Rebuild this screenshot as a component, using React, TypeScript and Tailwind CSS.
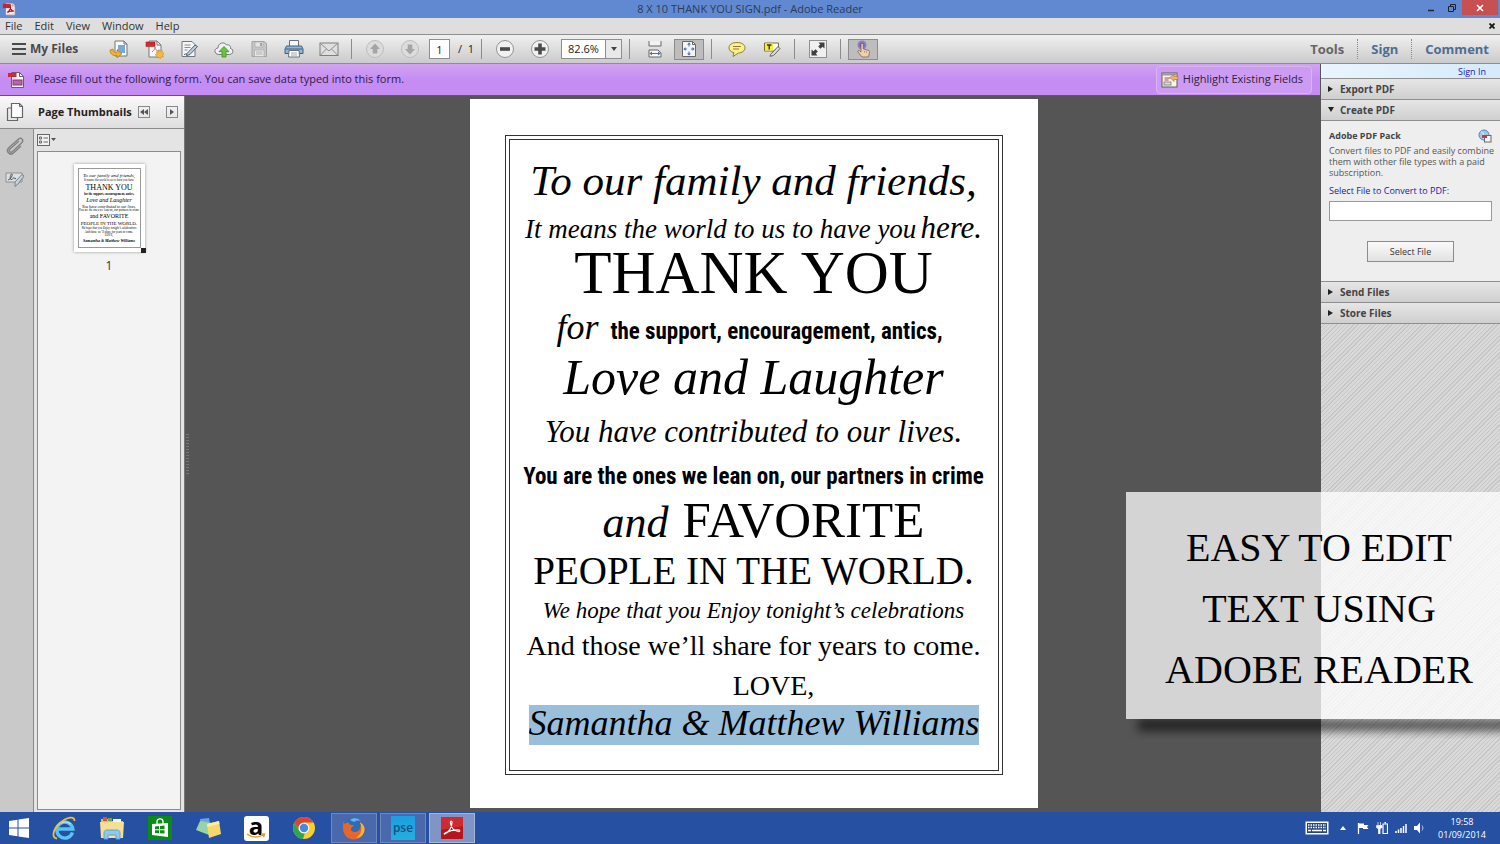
import type { ReactNode } from 'react';

const cx = (...parts: (string | false | undefined)[]) => parts.filter(Boolean).join(' ');

/* ---------- toolbar icons ---------- */

const PdfMark = ({ className }: { className?: string }) => (
  <svg viewBox="0 0 16 16" className={className} aria-hidden="true">
    <path d="M4 1h8l3 3v11H4z" fill="#f6eeee" stroke="#9a7676" strokeWidth=".8" />
    <path d="M11.500 1v3.500H15" fill="#ddd" stroke="#9a7676" strokeWidth=".6" />
    <rect x="1" y="2" width="9" height="5" fill="#c8232c" />
    <path d="M6 12c3-2 4-5 3.500-7.500C9 8 11 10 13.500 10.500 10 10 8 10.500 6 12z" fill="none" stroke="#b01620" strokeWidth="1.400" />
  </svg>
);

const OpenIcon = () => (
  <svg viewBox="0 0 20 20" className="size-5">
    <path d="M6 2h9l3 3v12H6z" fill="#f8fafc" stroke="#70757a" />
    <path d="M15 2v3h3" fill="none" stroke="#70757a" />
    <path d="M9 7h7M9 9h7M8 11h8M9 13h7" stroke="#4f8fd0" strokeWidth="1.300" />
    <path d="M1 11c0 5 4 6 7 5.500v2.300l5-4-5-3.800v2.300c-2 .5-4-.2-4-3.300z" fill="#f0b030" stroke="#b07a10" strokeWidth=".7" />
  </svg>
);
const CreateIcon = () => (
  <svg viewBox="0 0 20 20" className="size-5">
    <path d="M5 2h8l4 4v12H5z" fill="#f7f7f7" stroke="#77797c" />
    <path d="M13 2v4h4" fill="none" stroke="#77797c" />
    <rect x="2" y="3" width="9" height="4.500" fill="#d32a30" stroke="#a01418" strokeWidth=".5" />
    <path d="M8 13c2-1.500 3-3 3-5 0 2 1.500 4 4 4" fill="none" stroke="#b08080" />
    <path d="M15 10.500l1.200 1.700 2-.6.100 2.100 1.900.9-1.600 1.400.7 2-2.100-.1-1.100 1.900-1.500-1.500-2 .7.300-2-1.800-1.200 1.800-1.100-.2-2.100 2 .4z" fill="#f5b942" stroke="#c68a1c" strokeWidth=".6" />
  </svg>
);
const EditIcon = () => (
  <svg viewBox="0 0 20 20" className="size-5">
    <path d="M3 2.500h10l3 3v12H3z" fill="#f4f5f6" stroke="#73777b" />
    <path d="M5.500 6h6M5.500 8.500h6M5.500 11h3" stroke="#8a8e92" />
    <path d="M8 14.500l8-8.500 2.500 1.500-7.500 8-3.500 1.200z" fill="#b9cddd" stroke="#45586a" strokeWidth=".9" />
    <path d="M5 16c1-2 2 0 3-1.500" fill="none" stroke="#45586a" />
  </svg>
);
const CloudIcon = () => (
  <svg viewBox="0 0 20 20" className="size-5">
    <path d="M5 15.500c-5 0-5.500-6-1-6.500C4 4 10 2 12.500 6c3-1 4.500 1.500 4 3.500 3.500.5 3.200 6-1 6z" fill="#eef0f1" stroke="#777b7e" />
    <path d="M10 7.500l5 5.200h-3V18H8v-5.300H5z" fill="#6cc43a" stroke="#3f8f1c" strokeWidth=".8" />
  </svg>
);
const SaveIcon = () => (
  <svg viewBox="0 0 20 20" className="size-5">
    <path d="M3 2.500h12l2.500 2v13H3z" fill="#c6c6c6" stroke="#a3a3a3" />
    <rect x="6" y="3" width="8" height="5" fill="#e4e4e4" stroke="#a8a8a8" strokeWidth=".7" />
    <rect x="11" y="4" width="2" height="3" fill="#a3a3a3" />
    <rect x="5.500" y="11" width="9.500" height="6.500" fill="#e8e8e8" stroke="#a8a8a8" strokeWidth=".7" />
    <path d="M7 13h6.500M7 15h6.500" stroke="#b0b0b0" />
  </svg>
);
const PrintIcon = () => (
  <svg viewBox="0 0 20 20" className="size-5">
    <path d="M5.500 1.500h9V8h-9z" fill="#f5f7f9" stroke="#6b7076" />
    <path d="M2.500 7h15l1.500 3v4.500H1V10z" fill="#8fb6d6" stroke="#3f5f7c" />
    <path d="M2 10h16" stroke="#3f5f7c" />
    <path d="M5 11.500h10l.5 6.500h-11z" fill="#fff" stroke="#6b7076" />
    <path d="M7 14h6M7 16h6" stroke="#a3a9af" />
  </svg>
);
const MailIcon = () => (
  <svg viewBox="0 0 20 20" className="size-5">
    <rect x="1" y="4" width="18" height="12.500" fill="#dfdfdf" stroke="#7e7e7e" />
    <path d="M1.500 4.500L10 12l8.500-7.500M1.500 16l6-6M18.500 16l-6-6" fill="none" stroke="#8f8f8f" />
  </svg>
);
const ArrowIcon = ({ down }: { down?: boolean }) => (
  <svg viewBox="0 0 20 20" className={cx('size-5', down && 'rotate-180')}>
    <circle cx="10" cy="10" r="8.500" fill="#dcdcdc" stroke="#bdbdbd" />
    <path d="M10 4.500l5 5.500h-2.700v4.500H7.700V10H5z" fill="#a5a5a5" />
  </svg>
);
const ZoomIcon = ({ plus }: { plus?: boolean }) => (
  <svg viewBox="0 0 20 20" className="size-5">
    <circle cx="10" cy="10" r="8.500" fill="#f1f1f1" stroke="#949494" />
    <path d={plus ? 'M4.500 10h11M10 4.500v11' : 'M5 10h10'} stroke="#4b4b4b" strokeWidth="3.600" />
  </svg>
);
const FitWidthIcon = () => (
  <svg viewBox="0 0 20 20" className="size-5">
    <path d="M4 2v5h12V2" fill="#f2f2f2" stroke="#666" />
    <path d="M4 18v-7h9l3 3v4z" fill="#f8f8f8" stroke="#666" />
    <path d="M5 14.500h10" stroke="#4a6fa8" />
    <path d="M7 12.500L4.500 14.500 7 16.500M13 12.500l2.500 2-2.500 2z" fill="#4a6fa8" />
  </svg>
);
const FitPageIcon = () => (
  <svg viewBox="0 0 20 20" className="size-5">
    <path d="M3.500 2.500h10l3 3v12h-13z" fill="#f3f5f8" stroke="#666" />
    <path d="M13.500 2.500v3h3" fill="none" stroke="#666" />
    <path d="M10 4v3.500M10 16v-3.500M5 10h3M15 10h-3" stroke="#4a6fa8" />
    <path d="M10 3.500l2 2H8zM10 16.500l2-2H8zM4.500 10l2-2v4zM15.500 10l-2-2v4z" fill="#4a6fa8" />
  </svg>
);
const CommentIcon = () => (
  <svg viewBox="0 0 20 20" className="size-5">
    <path d="M10 3.500c5 0 8 2.200 8 5.300 0 3-3 5-6.500 5.200L6 17.500l1-3.800c-3-.6-5-2.400-5-4.900 0-3.100 3-5.300 8-5.300z" fill="#fbf08a" stroke="#8a7f35" />
    <path d="M6 7.500h8M6 10h6" stroke="#8a7f35" />
  </svg>
);
const HighlightTextIcon = () => (
  <svg viewBox="0 0 20 20" className="size-5">
    <path d="M2.500 4h14v5l-5 3h-9z" fill="#fbfbf0" stroke="#77703a" />
    <rect x="3" y="4.500" width="8" height="7" fill="#f8ec3a" />
    <path d="M5 6h4.500M7.200 6v4.500" stroke="#333" strokeWidth="1.400" />
    <path d="M8.500 15.500l7.500-8 2 2.200-6.500 6.800-3.500.8z" fill="#d8d8d8" stroke="#55585b" strokeWidth=".9" />
  </svg>
);
const FullscreenIcon = () => (
  <svg viewBox="0 0 20 20" className="size-5">
    <rect x="1.500" y="1.500" width="17" height="17" fill="#f0f0f0" stroke="#8f8f8f" />
    <path d="M16.500 3.500v6l-2-1.700-2 2-2.300-2.300 2-2-1.700-2zM3.500 16.500v-6l2 1.700 2-2 2.300 2.300-2 2 1.700 2z" fill="#3f3f3f" />
  </svg>
);
const TouchIcon = () => (
  <svg viewBox="0 0 20 20" className="size-5">
    <circle cx="9" cy="6" r="4.500" fill="#8f80bd" />
    <circle cx="9" cy="6" r="2.500" fill="#6a58a8" />
    <path d="M8 5.500c0-1.600 2.300-1.600 2.300 0V10l5 1.300c1 .3 1.300 1 1.200 2L15.500 18H9l-4-5c-.8-1.200.6-2 1.500-1.200L8 13z" fill="#ecd0b4" stroke="#7d6757" strokeWidth=".8" />
    <path d="M11.500 12v1.500M13.500 12.300v1.500" stroke="#7d6757" strokeWidth=".6" />
  </svg>
);
const FormIcon = () => (
  <svg viewBox="0 0 18 18" className="size-[18px] shrink-0" aria-hidden="true">
    <path d="M3.500 1.500h8l4 4v11h-12z" fill="#fbf7fb" stroke="#6c5a70" />
    <path d="M11.500 1.500v4h4" fill="none" stroke="#6c5a70" />
    <rect x="0" y="2" width="8.500" height="4" fill="#d7262e" />
    <rect x="5" y="9" width="9" height="5" fill="#c25fae" stroke="#7d3a72" />
  </svg>
);
const FieldsIcon = () => (
  <svg viewBox="0 0 18 18" className="size-[18px] shrink-0" aria-hidden="true">
    <rect x="1" y="2" width="15" height="14" fill="#f7f4ee" stroke="#5e5a5e" />
    <rect x="1.500" y="2.500" width="14" height="2" fill="#9a979a" />
    <path d="M3.500 7h6M3.500 9h4" stroke="#b44" strokeWidth="1.200" />
    <rect x="3" y="11" width="7" height="3" fill="#ddd" stroke="#777" strokeWidth=".8" />
    <path d="M9 6.500l4-3v2h4v3h-4v2z" fill="#f4b55a" stroke="#a8702a" strokeWidth=".6" />
  </svg>
);

/* ---------- shared bits ---------- */

const ToolButton = ({ label, children, pressed }: { label: string; children: ReactNode; pressed?: boolean }) => (
  <button
    type="button"
    aria-label={label}
    className={cx('flex h-[21px] items-center justify-center', pressed ? 'ml-0.5 w-[30px] border border-[#8c8c8c] bg-[#bdbdbd]' : 'w-[35px]')}
  >
    {children}
  </button>
);

const Divider = ({ wide }: { wide?: boolean }) => <span className={cx('h-5 w-px bg-[#8b8b8b]', wide ? 'mx-[7px]' : 'mx-[5px]')} />;

const Toolbar = () => (
  <div className="flex h-[30px] items-center border-y border-[#8e8e8e] bg-linear-to-b from-[#f0f0f0] to-[#cbcbcb] pl-3">
    <button type="button" className="flex w-[89px] items-center gap-1 text-[12px] leading-4 font-bold whitespace-nowrap text-[#4a4a4a]">
      <svg viewBox="0 0 14 12" className="h-3 w-3.5" aria-hidden="true">
        <path d="M0 1h14M0 6h14M0 11h14" stroke="#4a4a4a" strokeWidth="1.800" />
      </svg>
      My Files
    </button>
    <ToolButton label="Open"><OpenIcon /></ToolButton>
    <ToolButton label="Create PDF"><CreateIcon /></ToolButton>
    <ToolButton label="Edit"><EditIcon /></ToolButton>
    <ToolButton label="Upload"><CloudIcon /></ToolButton>
    <ToolButton label="Save"><SaveIcon /></ToolButton>
    <ToolButton label="Print"><PrintIcon /></ToolButton>
    <ToolButton label="Email"><MailIcon /></ToolButton>
    <Divider />
    <ToolButton label="Previous page"><ArrowIcon /></ToolButton>
    <ToolButton label="Next page"><ArrowIcon down /></ToolButton>
    <input aria-label="Page number" defaultValue="1" className="ml-0.5 h-5 w-[21px] border border-[#8e8e8e] bg-white text-center text-[11px] leading-4 text-[#222]" />
    <span className="mx-2 mr-0.5 text-[11px] leading-4 text-[#222]">/&nbsp; 1</span>
    <Divider />
    <ToolButton label="Zoom out"><ZoomIcon /></ToolButton>
    <ToolButton label="Zoom in"><ZoomIcon plus /></ToolButton>
    <div className="relative ml-1 flex h-5 w-[61px] border border-[#8e8e8e] bg-white">
      <select aria-label="Zoom level" className="w-full appearance-none bg-transparent pl-1.5 text-[11px] text-[#222]">
        <option>82.6%</option>
      </select>
      <span className="pointer-events-none absolute inset-y-0 right-0 flex w-4 items-center justify-center border-l border-[#8e8e8e] bg-[#e9e9e9]">
        <svg viewBox="0 0 6 4" className="h-1 w-1.5"><path d="M0 0h6L3 4z" fill="#444" /></svg>
      </span>
    </div>
    <Divider wide />
    <ToolButton label="Fit width"><FitWidthIcon /></ToolButton>
    <ToolButton label="Fit page" pressed><FitPageIcon /></ToolButton>
    <Divider wide />
    <ToolButton label="Add comment"><CommentIcon /></ToolButton>
    <ToolButton label="Highlight text"><HighlightTextIcon /></ToolButton>
    <Divider />
    <ToolButton label="Full screen"><FullscreenIcon /></ToolButton>
    <Divider />
    <ToolButton label="Touch mode" pressed><TouchIcon /></ToolButton>
    <div className="ml-auto flex h-5 items-center text-[13px] leading-5 font-bold text-[#4f6d92]">
      <button type="button" className="px-[13px] text-[#666]">Tools</button>
      <button type="button" className="border-x border-dotted border-[#888] px-[13px]">Sign</button>
      <button type="button" className="px-[11px] pl-[13px]">Comment</button>
    </div>
  </div>
);

const TitleBar = () => (
  <header className="flex h-[18px] shrink-0 items-center bg-[#6189d1] text-[11px] text-[#2c3a58]">
    <div className="flex flex-1 items-center">
      <PdfMark className="ml-0.5 h-4 w-3.5" />
    </div>
    <h1>8 X 10 THANK YOU SIGN.pdf - Adobe Reader</h1>
    <div className="flex flex-1 items-start justify-end self-stretch">
      <button type="button" aria-label="Minimize" className="flex h-[15px] w-[21px] items-center justify-center">
        <svg viewBox="0 0 8 8" className="size-2"><path d="M1 6.500h6" stroke="#222" strokeWidth="1.500" /></svg>
      </button>
      <button type="button" aria-label="Restore" className="flex h-[15px] w-[21px] items-center justify-center">
        <svg viewBox="0 0 8 8" className="size-2"><path d="M.5 2.500h5v5h-5zM2.500 2V.5h5v5H6" fill="none" stroke="#222" /></svg>
      </button>
      <button type="button" aria-label="Close" className="mr-0.5 flex h-[15px] w-9 items-center justify-center bg-[#c75050]">
        <svg viewBox="0 0 8 8" className="size-2"><path d="M1 1l6 6M7 1L1 7" stroke="#fff" strokeWidth="1.600" /></svg>
      </button>
    </div>
  </header>
);

const MenuBar = () => (
  <nav className="flex h-4 shrink-0 items-center gap-3 bg-[#dedede] px-[5px] text-[11px] text-[#333]">
    {['File', 'Edit', 'View', 'Window', 'Help'].map((m) => (
      <button key={m} type="button" className="leading-4">{m}</button>
    ))}
    <button type="button" aria-label="Close document" className="ml-auto">
      <svg viewBox="0 0 6 6" className="size-1.5"><path d="M.5 .5l5 5M5.500 .5l-5 5" stroke="#111" strokeWidth="1.700" /></svg>
    </button>
  </nav>
);

const FormNotice = () => (
  <div className="flex h-8 shrink-0 items-center gap-2 border-b border-[#70449a] bg-linear-to-b from-[#d0a4ee] to-[#c58df4] to-50% px-2 text-[#2e1c40]">
    <FormIcon />
    <p className="text-[11px]">Please fill out the following form. You can save data typed into this form.</p>
    <button type="button" className="ml-auto flex h-7 items-center gap-1 rounded-sm border border-[#d9b4f5] bg-[#cc9cf3] pr-2 pl-1 text-[11px]">
      <FieldsIcon />
      Highlight Existing Fields
    </button>
  </div>
);

/* ---------- sign artwork ---------- */

const Sign = () => (
  <article className="w-[568px] bg-white px-[35px] pt-9 pb-[33px]">
    <div className="border border-[#333] p-[3px]">
      <div className="flex h-[632px] flex-col items-center border border-[#333] pt-[19px] font-['Liberation_Serif',serif] leading-none whitespace-nowrap text-black">
        <p className="text-[43px] leading-none italic">To our family and friends,</p>
        <p className="mt-2.5 flex items-baseline gap-1 text-[27px] leading-none italic">
          It means the world to us to have you <span className="text-[31px] leading-none">here.</span>
        </p>
        <p className="text-[61px] leading-[60px]">THANK YOU</p>
        <p className="mt-1.5 flex items-baseline gap-3 pr-2">
          <span className="text-[36px] leading-none italic">for</span>
          <span className="font-['Roboto_Condensed','Liberation_Serif',serif] text-[23px] leading-6 font-bold">the support, encouragement, antics,</span>
        </p>
        <p className="mt-[7px] text-[50px] leading-none italic">Love and Laughter</p>
        <p className="mt-3.5 text-[31px] leading-none italic">You have contributed to our lives.</p>
        <p className="mt-[18px] font-['Roboto_Condensed','Liberation_Serif',serif] text-[23px] leading-6 font-bold">You are the ones we lean on, our partners in crime</p>
        <p className="mt-1.5 flex items-baseline gap-3.5 pl-5 text-[51px] leading-none">
          <span className="text-[44px] leading-none italic">and</span>FAVORITE
        </p>
        <p className="mt-[5px] text-[39px] leading-none">PEOPLE IN THE WORLD.</p>
        <p className="mt-2.5 text-[23px] leading-[22px] italic">We hope that you Enjoy tonight’s celebrations</p>
        <p className="mt-2.5 text-[28px] leading-none">And those we’ll share for years to come.</p>
        <p className="mt-3 pl-10 text-[28px] leading-none">LOVE,</p>
        <input
          aria-label="Names"
          defaultValue="Samantha & Matthew Williams"
          className="mt-[5px] h-10 w-[450px] bg-[#9abfdb] pb-1 text-center text-[36px] leading-9 italic outline-none"
        />
      </div>
    </div>
  </article>
);

const thumbLines = [
  { text: 'To our family and friends,', style: 'text-[5px] italic' },
  { text: 'It means the world to us to have you here.', style: 'text-[3px] italic' },
  { text: 'THANK YOU', style: 'text-[8px]' },
  { text: 'for the support, encouragement, antics,', style: 'text-[3px] font-bold' },
  { text: 'Love and Laughter', style: 'text-[6px] italic' },
  { text: 'You have contributed to our lives.', style: 'text-[4px] italic' },
  { text: 'You are the ones we lean on, our partners in crime', style: 'text-[3px]' },
  { text: 'and FAVORITE', style: 'text-[6px]' },
  { text: 'PEOPLE IN THE WORLD.', style: 'text-[5px]' },
  { text: 'We hope that you Enjoy tonight’s celebrations', style: 'text-[3px] italic' },
  { text: 'And those we’ll share for years to come.', style: 'text-[3px]' },
  { text: 'LOVE,', style: 'text-[3px]' },
  { text: 'Samantha & Matthew Williams', style: 'text-[4px] font-bold italic' },
];

const Thumbnail = () => (
  <button type="button" className="flex flex-col items-center gap-1.5 text-[12px] text-[#333]">
    <span className="relative block h-[88px] w-[71px] bg-white p-1 shadow-[0_0_3px_#999]">
      <span className="flex h-full flex-col items-center justify-center overflow-hidden border border-[#999] font-['Liberation_Serif',serif] whitespace-nowrap text-black">
        {thumbLines.map((l) => (
          <span key={l.text} className={cx('block leading-tight', l.style)}>{l.text}</span>
        ))}
      </span>
      <span className="absolute -right-px -bottom-px size-[5px] bg-[#222]" />
    </span>
    <span className="leading-4">1</span>
  </button>
);

const SidePanel = () => (
  <aside className="flex w-[185px] shrink-0 flex-col border-r border-[#777]">
    <div className="flex h-[33px] shrink-0 items-center border-b border-[#8b8b8b] bg-linear-to-b from-[#fafafa] to-[#dedede] px-1.5">
      <button type="button" aria-label="Pages" className="flex w-8 shrink-0 items-center">
        <svg viewBox="0 0 18 20" className="h-5 w-[18px]">
          <path d="M2 6h4M1.500 6v12.500h10V16" fill="none" stroke="#666" strokeWidth="1.200" />
          <path d="M5.500 1.500h8l3 3v11h-11z" fill="#fdfdfd" stroke="#666" strokeWidth="1.200" />
          <path d="M13.500 1.500v3h3" fill="none" stroke="#666" />
        </svg>
      </button>
      <h2 className="text-[11px] font-bold whitespace-nowrap text-[#222]">Page Thumbnails</h2>
      <button type="button" aria-label="Collapse" className="ml-auto flex size-3 shrink-0 items-center justify-center border border-[#888]">
        <svg viewBox="0 0 8 6" className="h-1.5 w-2"><path d="M4 0v6L0 3zM8 0v6L4 3z" fill="#555" /></svg>
      </button>
      <button type="button" aria-label="Expand" className="ml-4 flex size-3 shrink-0 items-center justify-center border border-[#888]">
        <svg viewBox="0 0 4 6" className="h-1.5 w-1"><path d="M0 0v6l4-3z" fill="#555" /></svg>
      </button>
    </div>
    <div className="flex flex-1">
      <div className="flex w-[34px] flex-col items-center gap-3 border-r border-[#8b8b8b] bg-[#c9c9c9] pt-1.5">
        <button type="button" aria-label="Attachments" className="pr-1">
          <svg viewBox="0 0 22 22" className="size-[22px]">
            <path d="M15 6L6 14c-2 2 .5 4.500 2.500 2.500l9-8.500c3-3-.5-6.500-3.500-3.500L5 12.500c-4 4 1 9 5 5L17 11" fill="none" stroke="#828282" strokeWidth="1.400" />
          </svg>
        </button>
        <button type="button" aria-label="Signatures" className="pr-1">
          <svg viewBox="0 0 20 20" className="size-5">
            <path d="M1 4h16v9H1z" fill="#dcdfe2" stroke="#8d9092" />
            <path d="M3 11c3-1 5-5 4-6s-3 5-1 5.500 2-2 3-2 0 2 2 1" fill="none" stroke="#555" />
            <path d="M10 13l7-7.500 2 1.500-6 8-3 2.500z" fill="#c6d3dd" stroke="#78828a" />
          </svg>
        </button>
      </div>
      <div className="flex flex-1 flex-col bg-[#e4e4e4] px-[3px] pb-0.5">
        <button type="button" aria-label="Options" className="flex h-[22px] items-center">
          <svg viewBox="0 0 20 12" className="h-3 w-5">
            <rect x=".5" y=".5" width="12" height="11" fill="#f2f2f2" stroke="#666" />
            <path d="M2.500 3h2v2h-2zM2.500 7h2v2h-2z" fill="none" stroke="#666" />
            <path d="M6.500 4H11M6.500 8H11" stroke="#666" />
            <path d="M14 4h5l-2.500 3z" fill="#555" />
          </svg>
        </button>
        <div className="flex flex-1 flex-col items-center border border-[#8b8b8b] bg-[#f3f3f3] pt-3">
          <Thumbnail />
        </div>
      </div>
    </div>
  </aside>
);

/* ---------- right tools pane ---------- */

const AccordionHeader = ({ title, open }: { title: string; open?: boolean }) => (
  <button type="button" aria-expanded={!!open} className="flex h-[21px] w-full shrink-0 items-center gap-1.5 border-b border-[#8f8f8f] bg-linear-to-b from-[#e6e6e6] to-[#cfcfcf] px-[7px] text-[10px] font-bold text-[#444]">
    <svg viewBox="0 0 6 6" className={cx('size-1.5', open && 'rotate-90')} aria-hidden="true"><path d="M0 0v6l5-3z" fill="#222" /></svg>
    {title}
  </button>
);

const ToolsPane = () => (
  <aside className="flex w-[180px] shrink-0 flex-col border-l border-[#555] bg-[repeating-linear-gradient(135deg,#c6c6c6_0px,#c6c6c6_1px,#d9d9d9_1px,#d9d9d9_3px)]">
    <div className="flex h-[15px] shrink-0 items-center justify-end border-b border-[#8f8f8f] bg-linear-to-r from-[#e9f5fd] to-[#d5eafa] pr-3.5">
      <a href="#sign-in" className="text-[9px] leading-none text-[#1717c4]">Sign In</a>
    </div>
    <AccordionHeader title="Export PDF" />
    <AccordionHeader title="Create PDF" open />
    <section className="flex h-[161px] shrink-0 flex-col border-b border-[#8f8f8f] bg-[#eee] px-2 pt-2 text-[9px] text-[#555]">
      <div className="flex items-center justify-between">
        <h3 className="leading-3 font-bold text-[#444]">Adobe PDF Pack</h3>
        <svg viewBox="0 0 14 14" className="size-3.5" aria-hidden="true">
          <circle cx="6" cy="6" r="5" fill="#9cc7ea" stroke="#5a86ae" />
          <path d="M3 3c2 0 3 1 2 3s1 2 1 4" fill="none" stroke="#e6f4fd" />
          <rect x="6.500" y="6.500" width="6.500" height="6.500" fill="#f5f5f5" stroke="#666" />
          <path d="M4 6h5v3H4z" fill="#c23a3a" />
        </svg>
      </div>
      <p className="-mr-2 mt-0.5 leading-[11px]">Convert files to PDF and easily combine them with other file types with a paid subscription.</p>
      <label htmlFor="convert-file" className="mt-[7px] leading-3 text-[#1a1a9c]">Select File to Convert to PDF:</label>
      <input id="convert-file" className="mt-1 h-5 w-full shrink-0 border border-[#999] bg-white px-1" />
      <button type="button" className="mt-5 h-[21px] w-[87px] self-center border border-[#8c8c8c] bg-linear-to-b from-[#fafafa] to-[#e2e2e2] text-[#333]">Select File</button>
    </section>
    <AccordionHeader title="Send Files" />
    <AccordionHeader title="Store Files" />
  </aside>
);

/* ---------- taskbar ---------- */

const WindowsIcon = () => (
  <svg viewBox="0 0 22 22" className="size-[22px]"><path d="M1 4l8.500-1.300v7.700H1zM10.500 2.600L21 1v9.400H10.500zM1 11.500h8.500v7.800L1 18zM10.500 11.500H21V21l-10.500-1.600z" fill="#fff" /></svg>
);
const IeIcon = () => (
  <svg viewBox="0 0 24 24" className="size-6">
    <path d="M20.500 16.500A8 8 0 1 1 20.800 13H6" fill="none" stroke="#58c4f4" strokeWidth="3.400" />
    <path d="M6 9.500C8 6 15 4.500 18.500 8" fill="none" stroke="#b5ebfd" strokeWidth="1.200" />
    <path d="M5 22.500C-1 22 1 13 8 7c7-6 15-7.500 14.500-2" fill="none" stroke="#f0c03a" strokeWidth="1.800" />
  </svg>
);
const ExplorerIcon = () => (
  <svg viewBox="0 0 26 24" className="h-6 w-[26px]">
    <path d="M2 3h7l2 2h13v16H2z" fill="#e5bd61" />
    <path d="M4 1h4v4H4z" fill="#d9524b" /><path d="M9 2h4v3H9z" fill="#60a957" /><path d="M14 3h8v3h-8z" fill="#f4f4f4" />
    <path d="M1 6h24l-1 16H2z" fill="#f6df94" />
    <path d="M5 23v-6c0-2 1-3 3-3h10c2 0 3 1 3 3v6h-4v-4H9v4z" fill="#8fc9ec" stroke="#5ea4d0" />
  </svg>
);
const StoreIcon = () => (
  <svg viewBox="0 0 24 24" className="size-6">
    <rect width="24" height="24" fill="#0b8a17" />
    <path d="M9 8V5.500c0-3.500 6-3.500 6 0V8" fill="none" stroke="#fff" strokeWidth="1.300" />
    <path d="M4 8l16-1v14L4 19z" fill="#fff" />
    <path d="M7 10.500l4-.4v3.200H7zM12 10l4.500-.4v3.700H12zM7 14.200h4v3l-4-.2zM12 14.200h4.500v3.400l-4.500-.3z" fill="#0b8a17" />
  </svg>
);
const NotesIcon = () => (
  <svg viewBox="0 0 26 24" className="h-6 w-[26px]">
    <path d="M5 3l9-1 2 12-9 2z" fill="#6ba6df" />
    <path d="M5 5l12 2-3 12-13-5z" fill="#97d3a8" />
    <path d="M12 8l12-3 2 13-12 4z" fill="#f6d868" />
    <path d="M12 8l12-3 .5 3-12 3z" fill="#fbeca4" />
  </svg>
);
const ChromeIcon = () => (
  <svg viewBox="0 0 24 24" className="size-6">
    <circle cx="12" cy="12" r="11" fill="#f7d02f" />
    <path d="M12 1a11 11 0 0 1 9.500 5.500H12A5.500 5.500 0 0 0 7 14.500L2.500 6.500A11 11 0 0 1 12 1z" fill="#dd4236" />
    <path d="M2.500 6.500l4.700 8.200c1.300 2.200 3.500 3 5.500 2.700L11 23A11 11 0 0 1 2.500 6.500z" fill="#32a350" />
    <circle cx="12" cy="12" r="5.300" fill="#fff" /><circle cx="12" cy="12" r="4.200" fill="#4688e8" />
  </svg>
);
const FirefoxIcon = () => (
  <svg viewBox="0 0 24 24" className="size-6">
    <circle cx="12" cy="11" r="9.500" fill="#2c6cb8" />
    <path d="M8 4c3-3 9-2 11 1-3-1-6 0-7 1z" fill="#65b7ea" />
    <path d="M2 5c0 2 0 2 1 3 1-1 3-2 4-1 0 2 3 2 5 2-1 2-3 2-3 4 0 3 4 4 7 2 3-2 3-6 2-9 3 2 5 5 4.500 8C22 20 17 23.500 12 23.500 5 23.500 1 18 1 12c0-3 0-5 1-7z" fill="#e8662a" />
    <path d="M18 6c3 2 5 5 4.500 8C22 19 18 22 14 22c5-3 7-9 4-16z" fill="#f7b733" />
  </svg>
);
const AcrobatIcon = () => (
  <svg viewBox="0 0 24 24" className="size-[22px]">
    <rect width="24" height="24" rx="1" fill="#b5151b" /><path d="M0 0h24v10L0 14z" fill="#cf2a2e" />
    <path d="M4 18.500c5-2 8-8 8-12.500 0-2-2-2-1.800 0C10.800 11 14 15.500 19.500 16c1.500 0 1.300-2-.5-2-5-.3-10 1-14.200 3.300-1.500.9-1.700 1.600-.8 1.200z" fill="none" stroke="#fff" strokeWidth="1.300" />
  </svg>
);

const TaskButton = ({ label, running, active, children }: { label: string; running?: boolean; active?: boolean; children: ReactNode }) => (
  <button
    type="button"
    aria-label={label}
    className={cx(
      'flex items-center justify-center',
      running || active ? 'mr-[3px] h-[30px] w-[46px] border' : 'h-[30px] w-12',
      running && 'border-[#6d87bf] bg-[#4a69ad]',
      active && 'border-[#a5b5d8] bg-[#8095c5]',
    )}
  >
    {children}
  </button>
);

const Taskbar = () => (
  <footer className="flex h-8 shrink-0 items-center bg-[#2650a2]">
    <button type="button" aria-label="Start" className="ml-2 flex h-[30px] w-8 items-center"><WindowsIcon /></button>
    <TaskButton label="Internet Explorer"><IeIcon /></TaskButton>
    <TaskButton label="File Explorer"><ExplorerIcon /></TaskButton>
    <TaskButton label="Store"><StoreIcon /></TaskButton>
    <TaskButton label="Sticky Notes"><NotesIcon /></TaskButton>
    <TaskButton label="Amazon">
      <span className="relative flex size-[25px] items-center justify-center rounded-[3px] bg-white pb-1 text-[24px] leading-none font-bold text-black">
        a
        <svg viewBox="0 0 20 6" className="absolute bottom-0.5 h-1.5 w-5"><path d="M1 1c5 4 12 4 17 0M15 1h3.500l-1 3" fill="none" stroke="#f29a1f" strokeWidth="1.500" /></svg>
      </span>
    </TaskButton>
    <TaskButton label="Chrome"><ChromeIcon /></TaskButton>
    <span className="w-[3px]" />
    <TaskButton label="Firefox" running><FirefoxIcon /></TaskButton>
    <TaskButton label="Photoshop Elements" running>
      <span className="flex size-6 items-center justify-center bg-linear-to-b from-[#1b9fe0] to-[#24aede] text-[12px] leading-none font-semibold text-[#11527f]">pse</span>
    </TaskButton>
    <TaskButton label="Adobe Reader" active><AcrobatIcon /></TaskButton>
    <div className="ml-auto flex items-center pr-3.5">
      <svg viewBox="0 0 24 14" className="h-3.5 w-6" aria-label="Keyboard">
        <rect x=".5" y=".5" width="23" height="13" fill="#fff" />
        <rect x="2" y="2" width="20" height="10" fill="#29477f" />
        <path d="M3 4h18M3 6.500h18" stroke="#fff" strokeWidth="1.500" strokeDasharray="1.500 1" />
        <path d="M3 9.500h3M7 9.500h10M18 9.500h3" stroke="#fff" strokeWidth="1.500" />
      </svg>
      <svg viewBox="0 0 6 4" className="ml-[11px] h-1 w-1.5"><path d="M0 4h6L3 0z" fill="#fff" /></svg>
      <svg viewBox="0 0 12 12" className="ml-[11px] size-3"><path d="M1.500 1v11" stroke="#fff" strokeWidth="1.300" /><path d="M2 1.500h5v1.500h4.500L10 5l1.500 2H6V6H2z" fill="#fff" /></svg>
      <svg viewBox="0 0 12 12" className="ml-[7px] size-3"><path d="M2 0v3M4.500 0v3M.5 3.500h5.500v2L4 7v5H2.500V7L.5 5.500z" fill="#fff" stroke="#fff" strokeWidth=".7" /><path d="M7 2h4.500v9.500H7zM8.500 .7h1.500" fill="none" stroke="#fff" strokeWidth="1.200" /></svg>
      <svg viewBox="0 0 12 12" className="ml-[7px] size-3"><path d="M1 9v2M3.500 7.500V11M6 6v5M8.500 4v7M11 2v9" stroke="#fff" strokeWidth="1.500" /></svg>
      <svg viewBox="0 0 12 12" className="ml-[7px] size-3"><path d="M0 4h3l3-3.500v11L3 8H0z" fill="#fff" /><path d="M8 3.500c1.200 1.500 1.200 3.500 0 5" fill="none" stroke="#b8c6e4" /></svg>
      <div className="ml-3 w-[48px] text-center text-[9px] leading-[13px] whitespace-nowrap text-white">
        <div>19:58</div>
        <div>01/09/2014</div>
      </div>
    </div>
  </footer>
);

export default function App() {
  return (
    <div className="relative flex min-h-screen flex-col overflow-hidden bg-[#555] font-['Open_Sans','Noto_Sans',sans-serif]">
      <TitleBar />
      <MenuBar />
      <Toolbar />
      <div className="flex flex-1">
        <div className="flex min-w-0 flex-1 flex-col">
          <FormNotice />
          <div className="flex flex-1">
            <SidePanel />
            <div className="flex w-1 shrink-0 flex-col items-center justify-center">
              <span className="h-10 w-[3px] bg-[repeating-linear-gradient(0deg,#777_0px,#777_1px,#555_1px,#555_3px)]" />
            </div>
            <main className="flex flex-1 items-start justify-center pt-[3px] pr-0.5">
              <Sign />
            </main>
          </div>
        </div>
        <ToolsPane />
      </div>
      <Taskbar />
      <div className="absolute right-0 bottom-[125px] w-[374px]">
        <div className="absolute inset-x-0 -bottom-5 left-0 h-5 overflow-hidden">
          <div className="-mr-3 ml-3 h-3 bg-black/60 blur-[5px]" />
        </div>
        <p className="bg-white/75 pt-[25px] pb-[19px] pl-3 text-center font-['Liberation_Serif',serif] text-[40px] leading-[61px] text-black">
          EASY TO EDIT
          <br />
          TEXT USING
          <br />
          ADOBE READER
        </p>
      </div>
    </div>
  );
}
